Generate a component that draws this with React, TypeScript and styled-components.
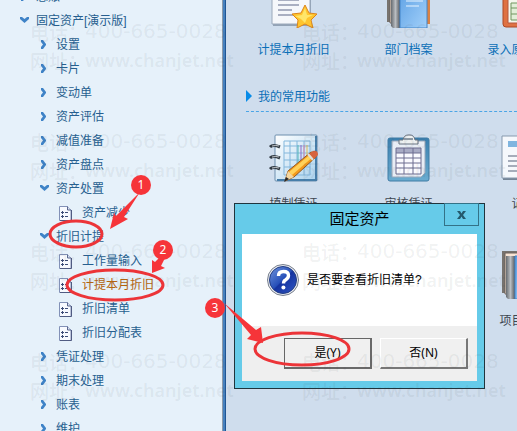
import React from 'react';
import styled, { createGlobalStyle } from 'styled-components';

const GlobalStyle = createGlobalStyle`
  * { box-sizing: border-box; }
  body { margin: 0; background: #cfdded; font-family: "Liberation Sans", "Noto Sans CJK SC", sans-serif; font-size: 12px; }
  button { font: inherit; }
`;

const Page = styled.div`
  position: relative;
  display: flex;
  height: 100vh;
  overflow: hidden;
`;

const Sidebar = styled.nav`
  flex: 0 0 222px;
  background: #e6f1fa;
  overflow: hidden;
`;

const Splitter = styled.div`
  flex: 0 0 4px;
  border-left: 1px solid #8d99a8;
  border-right: 1px solid #1f5594;
  background: #4680bd;
`;

const Tree = styled.ul`
  list-style: none;
  margin: -15px 0 0;
  padding: 0;
`;

const TreeRow = styled.li<{ $level: number }>`
  display: flex;
  align-items: center;
  height: 24px;
  padding-left: ${(p) => [0, 20, 40, 59][p.$level]}px;
`;

const Marker = styled.span<{ $leaf: boolean }>`
  display: flex;
  flex: none;
  width: ${(p) => (p.$leaf ? 23 : 16)}px;
`;

const TreeLink = styled.a<{ $active?: boolean }>`
  color: ${(p) => (p.$active ? '#b5650f' : '#275f8f')};
  text-decoration: none;
  line-height: 24px;
  white-space: nowrap;
`;

const Main = styled.main`
  flex: 1;
  min-width: 0;
  overflow: hidden;
  padding-left: 10px;
`;

const TileGrid = styled.div<{ $top: number }>`
  display: grid;
  grid-template-columns: repeat(3, 115px);
  row-gap: 33px;
  margin-top: ${(p) => p.$top}px;
`;

const Tile = styled.a<{ $primary?: boolean }>`
  display: flex;
  flex-direction: column;
  align-items: center;
  height: 84px;
  gap: 10px;
  color: ${(p) => (p.$primary ? '#0b6fb7' : '#3d4650')};
  text-decoration: none;
  line-height: 24px;
  white-space: nowrap;
`;

const SectionTitle = styled.h2`
  display: flex;
  align-items: center;
  gap: 6px;
  height: 32px;
  margin: 16px 0 0 10px;
  border-bottom: 1px dashed #4ba5e6;
  color: #0b6fb7;
  font-size: 12px;
  font-weight: 400;
`;

const Dialog = styled.section`
  position: absolute;
  left: 234px;
  top: 203px;
  width: 251px;
  padding: 0 7px 7px;
  border: 1px solid #20343d;
  background: #66cbe9;
  color: #000;
`;

const TitleBar = styled.header`
  display: flex;
  justify-content: center;
  height: 30px;
`;

const DialogTitle = styled.h1`
  margin: 0;
  font-size: 15px;
  font-weight: 400;
  line-height: 30px;
`;

const CloseButton = styled.button`
  position: absolute;
  top: -1px;
  right: 5px;
  width: 35px;
  height: 23px;
  padding: 0;
  border: 1px solid #337287;
  background: transparent;
  color: #245a6c;
  display: grid;
  place-items: center;
`;

const Message = styled.div`
  display: flex;
  align-items: center;
  gap: 8px;
  height: 92px;
  padding-left: 25px;
  background: #fff;
`;

const MessageText = styled.p`
  margin: 0;
  padding-bottom: 4px;
`;

const Actions = styled.footer`
  display: flex;
  justify-content: flex-end;
  gap: 8px;
  padding: 12px 9px;
  background: #efefef;
`;

const PushButton = styled.button<{ $default?: boolean }>`
  width: 88px;
  height: 31px;
  padding: 0 0 2px;
  border-style: solid;
  border-width: 1px 2px 2px 1px;
  border-color: ${(p) => (p.$default ? '#666 #696969 #696969 #666' : '#fff #777 #777 #fff')};
  background: #f0f0f0;
  color: #000;
  font-family: "Noto Sans", "Noto Sans CJK SC", sans-serif;
  font-size: 12px;
`;

const WatermarkLayer = styled.div`
  position: absolute;
  inset: 0;
  display: grid;
  grid-template-columns: repeat(2, 272px);
  grid-auto-rows: 110px;
  padding: 17px 0 0 30px;
  overflow: hidden;
  pointer-events: none;
  color: rgba(60, 65, 75, 0.08);
`;

const Stamp = styled.div`
  font: 500 19px/29px "Noto Sans CJK SC", sans-serif;
  white-space: nowrap;
`;

const StampLine = styled.div`
  display: grid;
  grid-template-columns: 55px 1fr;
  height: 29px;
`;

const Phone = styled.span`
  font: 20px/29px "DejaVu Sans", sans-serif;
`;

const Site = styled.span`
  font: 600 18px/29px "Noto Sans", sans-serif;
`;

const Annotations = styled.svg`
  position: absolute;
  left: 0;
  top: 0;
  pointer-events: none;
`;

const Chevron = ({ open }: { open?: boolean }) => (
  <svg width="10" height="10" viewBox="0 0 10 10" fill="#3f83c7" aria-hidden="true">
    {open ? <path d="M0 1h2l2.500 2L7 1h2v2L4.500 7 0 3z" /> : <path d="M1 0h2l3 4v1L3 9H1V7l2-2.500L1 2z" />}
  </svg>
);

const LeafIcon = () => (
  <svg width="13" height="15" viewBox="0 0 13 15" aria-hidden="true">
    <path d="M.5.5h8l3.500 3.500v10.500H.5z" fill="#f8faff" stroke="#8291b7" />
    <path d="M12.500 4v10.500H1" fill="none" stroke="#505b82" />
    <path d="M8.500.5V4H12" fill="#d9e1f2" stroke="#59678f" />
    <g fill="#3c4c77"><path d="M3 5h1v1h1v1H4v1H3V7H2V6h1zM3 9h1v1h1v1H4v1H3v-1H2v-1h1z" /><path d="M6 6h3v1H6zM6 10h3v1H6z" /></g>
  </svg>
);

const ReportIcon = () => (
  <svg width="48" height="48" viewBox="0 0 48 48" aria-hidden="true">
    <path d="M3 0h38v46H3z" fill="#6b7d91" opacity=".6" />
    <path d="M2 0h38v44H2z" fill="#f5f7fb" stroke="#9aa8ba" />
    <path d="M8 20h21M8 25h21M8 30h14M8 35h16" stroke="#a9afc2" strokeWidth="2" />
    <path d="m35 25 4 8 8 1-6 6 2 8-8-4-8 4 1-8-6-6 9-1z" fill="#ffc52e" stroke="#dc851b" strokeLinejoin="round" />
    <path d="m35 28 2 7h6l-6 3-2 5-4-4-6-3 7-1z" fill="#ffe66a" />
  </svg>
);

const BinderIcon = () => (
  <svg width="48" height="48" viewBox="0 0 48 48" aria-hidden="true">
    <defs>
      <linearGradient id="spine"><stop stopColor="#666b70" /><stop offset=".5" stopColor="#b9bdc1" /><stop offset="1" stopColor="#55585d" /></linearGradient>
      <linearGradient id="cover" x2="1" y2="1"><stop stopColor="#5b9fe3" /><stop offset="1" stopColor="#a2d0fa" /></linearGradient>
    </defs>
    <path d="M2 0h41v42H2z" fill="#77736f" />
    <path d="M5 2h38v41H5z" fill="#f7e4d4" stroke="#6c625c" />
    <path d="M42 4h3v40h-3z" fill="#d98245" />
    <path d="M6 5h9v43H8l-2-2z" fill="url(#spine)" />
    <path d="M15 5h27v43H15z" fill="url(#cover)" stroke="#4384c7" />
    <path d="M21 21h17M21 26h13" stroke="#e8f4ff" />
  </svg>
);

const BoardIcon = () => (
  <svg width="44" height="48" viewBox="0 0 44 48" aria-hidden="true">
    <rect x="1" y="1" width="42" height="46" rx="3" fill="#df7142" stroke="#ac4924" />
    <path d="M6 4h33v39H6z" fill="#f5f7ed" stroke="#b5573d" />
    <path d="M9 23h27v17H9zM9 28h27M9 34h27M16 23v17M23 23v17M30 23v17" fill="#e2efd8" stroke="#70955f" />
  </svg>
);

const NotebookIcon = () => (
  <svg width="52" height="48" viewBox="0 0 52 48" aria-hidden="true">
    <defs><linearGradient id="paper" y2="1" x2="1"><stop stopColor="#fff" /><stop offset="1" stopColor="#a9d2ee" /></linearGradient></defs>
    <rect x="7" y="1" width="42" height="46" rx="1" fill="url(#paper)" stroke="#6c8ead" />
    <path d="M48 2v44H9" fill="none" stroke="#477eaa" strokeWidth="2" />
    <path d="M16 7h26v34H16zM16 12h26M16 19h26M16 26h26M16 33h26M22 7v34M29 7v34M36 7v34" fill="none" stroke="#83b7dc" />
    <path d="M30 11v21" stroke="#57b7b7" /><path d="M33 11v20" stroke="#8b6bc5" /><path d="M36 11v17" stroke="#d981aa" /><path d="M39 11v16" stroke="#e0bd59" />
    <path d="M2 13q3-3 10 0M2 24q3-3 10 0M2 35q3-3 10 0" fill="none" stroke="#303942" strokeWidth="3" />
    <path d="M4 12q4-1 7 0M4 23q4-1 7 0M4 34q4-1 7 0" fill="none" stroke="#c7ccd0" />
    <path d="m17 47 3-10 23-19q5 0 5 5L26 43z" fill="#f39a1c" stroke="#935923" />
    <path d="m21 38 23-19 2 3-22 19z" fill="#ffd25b" />
    <path d="m20 37 6 6-9 4z" fill="#f3d7a1" /><path d="m18 43 3 2-5 3z" fill="#27282a" />
    <path d="m41 20 4-3q5-1 5 4l-4 4z" fill="#d7633d" /><path d="m40 20 5 6" stroke="#dedede" strokeWidth="2" />
  </svg>
);

const ClipboardIcon = () => (
  <svg width="44" height="48" viewBox="0 0 44 48" aria-hidden="true">
    <defs><linearGradient id="clip" x2="0" y2="1"><stop stopColor="#397eae" /><stop offset="1" stopColor="#6bacd0" /></linearGradient></defs>
    <rect x="1" y="4" width="41" height="43" rx="2" fill="url(#clip)" stroke="#407ca5" />
    <path d="M5 7h33v32l-4 4H5z" fill="#e8edf5" stroke="#9aa9bc" />
    <path d="M9 14h25v26H9z" fill="#fafaff" /><path d="M9 14h25v5H9z" fill="#a8abc5" />
    <path d="M9 14h25v26H9zM9 19h25M9 24h25M9 29h25M9 34h25M17 14v26M26 14v26" fill="none" stroke="#6c6d90" />
    <path d="M12 10V6h4q1-5 5-5h2q4 0 5 5h3v4z" fill="#eef0f1" stroke="#697581" />
    <rect x="17" y="4" width="9" height="2" fill="#8f9ba6" />
  </svg>
);

const LedgerIcon = () => (
  <svg width="48" height="48" viewBox="0 0 48 48" aria-hidden="true">
    <path d="M3 3h42v43H3z" fill="#758597" />
    <path d="M2 2h42v42H2z" fill="#f5f8fc" stroke="#8799ad" />
    <path d="M8 7h30v6H8z" fill="#80b5df" />
    <path d="M8 22h30M8 27h30M8 32h30M8 37h20" stroke="#a5acba" strokeWidth="2" />
  </svg>
);

const QuestionIcon = () => (
  <svg width="32" height="32" viewBox="0 0 32 32" aria-hidden="true">
    <defs><linearGradient id="ball" x2="1" y2="1"><stop stopColor="#7296dd" /><stop offset=".48" stopColor="#2750b9" /><stop offset=".52" stopColor="#1533a0" /><stop offset="1" stopColor="#3158c4" /></linearGradient></defs>
    <circle cx="16" cy="16" r="15.500" fill="#e7e9ee" stroke="#777f8d" />
    <circle cx="16" cy="16" r="13.500" fill="url(#ball)" stroke="#233d83" />
    <path d="M11.500 12q0-4.500 5-4.500 5 0 5 4 0 2.500-3 4.500-2 1-2 3.500" fill="none" stroke="#fff" strokeWidth="3.400" />
    <circle cx="16.400" cy="23.500" r="2" fill="#fff" />
  </svg>
);

type Row = { text: string; level: number; open?: boolean; active?: boolean };
const rows: Row[] = [
  { text: '总账', level: 1 },
  { text: '固定资产[演示版]', level: 1, open: true },
  { text: '设置', level: 2 },
  { text: '卡片', level: 2 },
  { text: '变动单', level: 2 },
  { text: '资产评估', level: 2 },
  { text: '减值准备', level: 2 },
  { text: '资产盘点', level: 2 },
  { text: '资产处置', level: 2, open: true },
  { text: '资产减少', level: 3 },
  { text: '折旧计提', level: 2, open: true },
  { text: '工作量输入', level: 3 },
  { text: '计提本月折旧', level: 3, active: true },
  { text: '折旧清单', level: 3 },
  { text: '折旧分配表', level: 3 },
  { text: '凭证处理', level: 2 },
  { text: '期末处理', level: 2 },
  { text: '账表', level: 2 },
  { text: '维护', level: 2 },
];

export default function App() {
  return (
    <Page>
      <GlobalStyle />
      <Sidebar>
        <Tree>
          {rows.map((r) => (
            <TreeRow key={r.text} $level={r.level}>
              <Marker $leaf={r.level === 3}>{r.level === 3 ? <LeafIcon /> : <Chevron open={r.open} />}</Marker>
              <TreeLink href="#" $active={r.active}>{r.text}</TreeLink>
            </TreeRow>
          ))}
        </Tree>
      </Sidebar>
      <Splitter />
      <Main>
        <TileGrid $top={-20}>
          <Tile href="#" $primary><ReportIcon />计提本月折旧</Tile>
          <Tile href="#" $primary><BinderIcon />部门档案</Tile>
          <Tile href="#" $primary><BoardIcon />录入原始卡片</Tile>
        </TileGrid>
        <SectionTitle>
          <svg width="6" height="12" viewBox="0 0 6 12" aria-hidden="true"><path d="M0 0l6 6-6 6z" fill="#078be8" /></svg>
          我的常用功能
        </SectionTitle>
        <TileGrid $top={22}>
          <Tile href="#"><NotebookIcon />填制凭证</Tile>
          <Tile href="#"><ClipboardIcon />审核凭证</Tile>
          <Tile href="#"><LedgerIcon />记账</Tile>
          <Tile href="#"><LedgerIcon />凭证查询</Tile>
          <Tile href="#"><ClipboardIcon />科目余额</Tile>
          <Tile href="#"><BinderIcon />项目档案</Tile>
        </TileGrid>
      </Main>
      <Dialog role="dialog" aria-labelledby="dialog-title">
        <TitleBar>
          <DialogTitle id="dialog-title">固定资产</DialogTitle>
          <CloseButton aria-label="关闭">
            <svg width="9" height="8" viewBox="0 0 9 8" aria-hidden="true"><path d="M0 0h3l1.500 2.500L6 0h3L6 4l3 4H6L4.500 5.500 3 8H0l3-4z" fill="#245a6c" /></svg>
          </CloseButton>
        </TitleBar>
        <Message>
          <QuestionIcon />
          <MessageText>是否要查看折旧清单?</MessageText>
        </Message>
        <Actions>
          <PushButton $default>是(Y)</PushButton>
          <PushButton>否(N)</PushButton>
        </Actions>
      </Dialog>
      <WatermarkLayer aria-hidden="true">
        {Array.from({ length: 8 }, (_, i) => (
          <Stamp key={i}>
            <StampLine><span>电话：</span><Phone>400-665-0028</Phone></StampLine>
            <StampLine><span>网址：</span><Site>www.chanjet.net</Site></StampLine>
          </Stamp>
        ))}
      </WatermarkLayer>
      <Annotations width="517" height="431" viewBox="0 0 517 431">
        <g fill="none" stroke="#ec3438" strokeWidth="3">
          <ellipse cx="76" cy="234" rx="26" ry="13" />
          <ellipse cx="115" cy="285" rx="48" ry="15" />
          <ellipse cx="302" cy="349" rx="47" ry="16" />
        </g>
        <g fill="#f63439">
          <circle cx="141" cy="185" r="10" /><circle cx="163" cy="250" r="10" /><circle cx="215" cy="308" r="10" />
          <path d="M140 192L116 216 114 213 110 229 128 219 124 217z" />
          <path d="M159 258L155 262 152 260 152 273 165 268 161 266 165 258z" />
          <path d="M224 303L256 330 261 327 263 343 247 339 251 335z" />
        </g>
        <g fill="#fff" fontSize="12" fontFamily="Noto Sans, sans-serif" textAnchor="middle">
          <text x="141" y="189">1</text><text x="163" y="254">2</text><text x="215" y="312">3</text>
        </g>
      </Annotations>
    </Page>
  );
}
